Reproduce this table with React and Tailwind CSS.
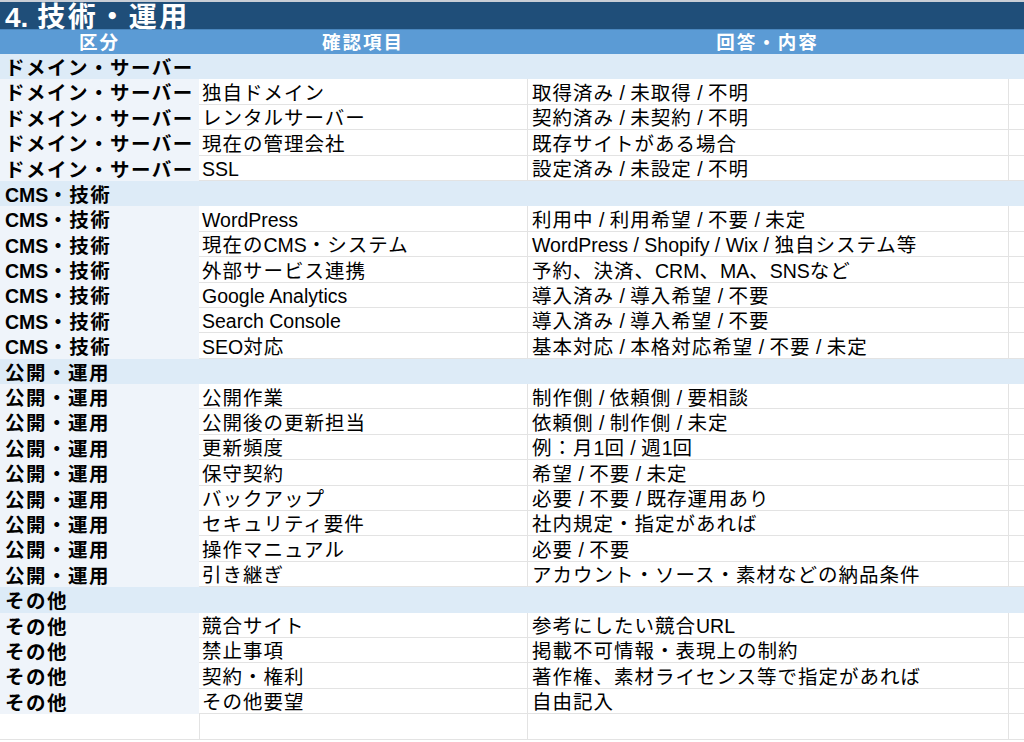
import React from "react";

const sections = [
  {
    name: "ドメイン・サーバー",
    rows: [
      ["独自ドメイン", "取得済み / 未取得 / 不明"],
      ["レンタルサーバー", "契約済み / 未契約 / 不明"],
      ["現在の管理会社", "既存サイトがある場合"],
      ["SSL", "設定済み / 未設定 / 不明"],
    ],
  },
  {
    name: "CMS・技術",
    rows: [
      ["WordPress", "利用中 / 利用希望 / 不要 / 未定"],
      ["現在のCMS・システム", "WordPress / Shopify / Wix / 独自システム等"],
      ["外部サービス連携", "予約、決済、CRM、MA、SNSなど"],
      ["Google Analytics", "導入済み / 導入希望 / 不要"],
      ["Search Console", "導入済み / 導入希望 / 不要"],
      ["SEO対応", "基本対応 / 本格対応希望 / 不要 / 未定"],
    ],
  },
  {
    name: "公開・運用",
    rows: [
      ["公開作業", "制作側 / 依頼側 / 要相談"],
      ["公開後の更新担当", "依頼側 / 制作側 / 未定"],
      ["更新頻度", "例：月1回 / 週1回"],
      ["保守契約", "希望 / 不要 / 未定"],
      ["バックアップ", "必要 / 不要 / 既存運用あり"],
      ["セキュリティ要件", "社内規定・指定があれば"],
      ["操作マニュアル", "必要 / 不要"],
      ["引き継ぎ", "アカウント・ソース・素材などの納品条件"],
    ],
  },
  {
    name: "その他",
    rows: [
      ["競合サイト", "参考にしたい競合URL"],
      ["禁止事項", "掲載不可情報・表現上の制約"],
      ["契約・権利", "著作権、素材ライセンス等で指定があれば"],
      ["その他要望", "自由記入"],
    ],
  },
];

const font = {
  fontFamily: '"Liberation Sans", "Noto Sans CJK JP", sans-serif',
};

const CJK = /([\u3000-\u30ff\u4e00-\u9fff\uff00-\uffef]+)/;

function Mixed({ text, bold }) {
  const parts = text.split(CJK);
  return (
    <span className="whitespace-pre">
      {parts.map((p, i) =>
        p === "" ? null : CJK.test(p) ? (
          <span key={i} className={bold ? "tracking-[1.5px]" : "tracking-[1px]"}>
            {p}
          </span>
        ) : (
          <span key={i}>{p}</span>
        )
      )}
    </span>
  );
}

function Row({ a, b, c }) {
  return (
    <div className="grid grid-cols-[199px_328px_481px_1fr] h-[25.4px] text-[19.5px] leading-none text-black">
      <div className="flex items-center pl-[5px] pt-[4px] bg-[#eff4fa] font-bold whitespace-nowrap overflow-hidden">
        <Mixed text={a} bold />
      </div>
      <div className="flex items-center pl-[3px] pt-[4px] border-b border-[#e3e3e3] whitespace-nowrap">
        <Mixed text={b} />
      </div>
      <div className="flex items-center pl-[4px] pt-[4px] border-b border-l border-[#e3e3e3] whitespace-nowrap">
        <Mixed text={c} />
      </div>
      <div className="border-b border-l border-[#e3e3e3]" />
    </div>
  );
}

export default function App() {
  return (
    <div className="w-[1024px] h-[742px] bg-white overflow-hidden" style={font}>
      <div className="h-[2px] bg-[#c9ced6]" />
      <div className="h-[27px] bg-[#1f4e79] flex items-center pl-[5px] pt-[4px] text-white font-bold text-[28px] leading-none whitespace-nowrap">
        <span>4.</span>
        <span className="tracking-[2.5px] ml-[9px]">技術・運用</span>
      </div>
      <div className="grid grid-cols-[199px_328px_481px_1fr] h-[25px] bg-[#5b9bd5] text-white font-bold text-[18.5px] leading-none border-t border-[#4a86bd]">
        <div className="flex items-center justify-center pt-[2px] tracking-[2px]">区分</div>
        <div className="flex items-center justify-center pt-[2px] tracking-[2px]">確認項目</div>
        <div className="flex items-center justify-center pt-[2px] tracking-[2px]">回答・内容</div>
        <div />
      </div>
      {sections.map((s) => (
        <React.Fragment key={s.name}>
          <div className="h-[25.4px] bg-[#ddebf7] flex items-center pl-[5px] pt-[4px] font-bold text-[19.5px] leading-none text-black whitespace-nowrap">
            <Mixed text={s.name} bold />
          </div>
          {s.rows.map((r, i) => (
            <Row key={i} a={s.name} b={r[0]} c={r[1]} />
          ))}
        </React.Fragment>
      ))}
      <div className="grid grid-cols-[199px_328px_481px_1fr] h-[25.4px]">
        <div className="border-b border-[#e3e3e3]" />
        <div className="border-b border-l border-[#e3e3e3]" />
        <div className="border-b border-l border-[#e3e3e3]" />
        <div className="border-b border-l border-[#e3e3e3]" />
      </div>
    </div>
  );
}
